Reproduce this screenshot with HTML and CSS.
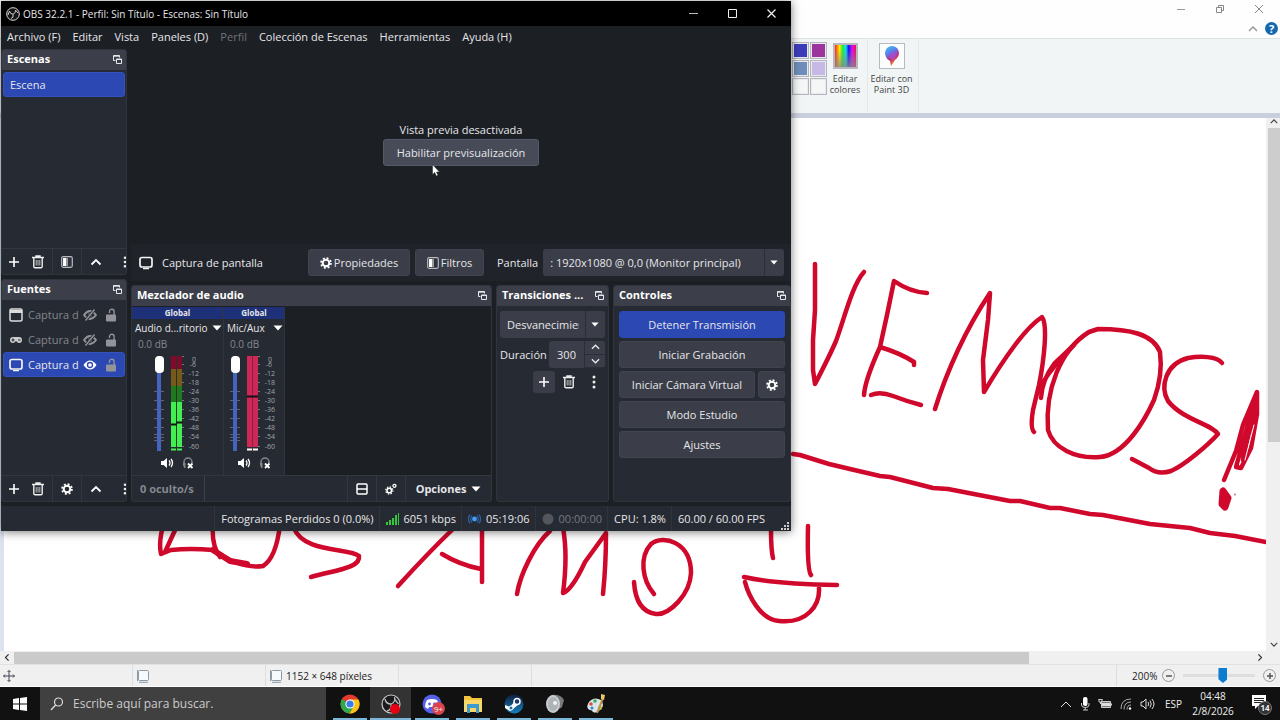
FILE: index.html
```html
<!DOCTYPE html>
<html lang="es">
<head>
<meta charset="utf-8">
<title>OBS 32.2.1 - Perfil: Sin Título - Escenas: Sin Título</title>
<link rel="stylesheet" href="styles.css">
</head>
<body>
<svg class="defs" aria-hidden="true">
  <symbol id="i-float" viewBox="0 0 9 9"><path d="M0.5 5.5v-5h6v2M0.5 1.2h6M0.5 5.5h2M3.5 4h5v4.500h-5zM3.5 4.500h5" fill="none" stroke="#e8e8ec"/></symbol>
  <symbol id="i-plus" viewBox="0 0 12 12"><path d="M6 1v10M1 6h10" fill="none" stroke="#fff" stroke-width="1.6"/></symbol>
  <symbol id="i-trash" viewBox="0 0 14 14"><path d="M1 2.5h12M5 2V1h4v1M2.8 3v8.5q0 1.2 1.2 1.2h6q1.2 0 1.2-1.2V3" fill="none" stroke="#eee" stroke-width="1.4"/><path d="M5.2 5v5.500M7 5v5.500M8.8 5v5.500" stroke="#bbb" fill="none"/></symbol>
  <symbol id="i-filter" viewBox="0 0 12 12"><rect x=".7" y=".7" width="10.6" height="10.6" rx="1.5" fill="#30343d" stroke="#b8bac0" stroke-width="1.2"/><path d="M2 2h3v8H2z" fill="#fff"/><path d="M5 2h2v8H5z" fill="#999"/></symbol>
  <symbol id="i-up" viewBox="0 0 12 12"><path d="M1.5 8.5L6 4l4.500 4.500" fill="none" stroke="#fff" stroke-width="1.8"/></symbol>
  <symbol id="i-dots" viewBox="0 0 4 14"><g fill="#eee"><circle cx="2" cy="2" r="1.500"/><circle cx="2" cy="7" r="1.500"/><circle cx="2" cy="12" r="1.500"/></g></symbol>
  <symbol id="i-gear" viewBox="0 0 12 12"><circle cx="6" cy="6" r="3.300" fill="none" stroke="#fff" stroke-width="2"/><circle cx="6" cy="6" r="5" fill="none" stroke="#fff" stroke-width="1.600" stroke-dasharray="2 1.927"/></symbol>
  <symbol id="i-gears" viewBox="0 0 12 12"><circle cx="4.300" cy="7.500" r="2.300" fill="none" stroke="#fff" stroke-width="1.600"/><circle cx="4.300" cy="7.500" r="3.600" fill="none" stroke="#fff" stroke-width="1.200" stroke-dasharray="1.400 1.427"/><circle cx="9.500" cy="2.800" r="1.500" fill="none" stroke="#fff" stroke-width="1.300"/></symbol>
  <symbol id="i-monitor" viewBox="0 0 14 14"><rect x="1" y="1.500" width="12" height="9.500" rx="2" fill="none" stroke="#f4f4f4" stroke-width="1.700"/><path d="M4 12.600h6" stroke="#f4f4f4" stroke-width="1.300"/></symbol>
  <symbol id="i-window" viewBox="0 0 14 14"><rect x="1" y="1" width="12" height="12" rx="1.500" fill="none" stroke="#ddd" stroke-width="1.500"/><path d="M1 2h12v3H1z" fill="#ddd"/></symbol>
  <symbol id="i-pad" viewBox="0 0 14 14"><path d="M4 4h6a3 3 0 0 1 0 6q-1.500 0-2-1.500H6Q5.500 10 4 10a3 3 0 0 1 0-6z" fill="#ccc"/><path d="M2.500 7h3M4 5.500v3M9 7h2.500" stroke="#272a33" stroke-width="1.100"/></symbol>
  <symbol id="i-eye" viewBox="0 0 14 14"><path d="M.5 7Q3.500 2.500 7 2.500T13.500 7Q10.500 11.500 7 11.500T.5 7z" fill="#fff"/><circle cx="7" cy="7" r="2.500" fill="none" stroke="#2b48b3" stroke-width="1.300"/></symbol>
  <symbol id="i-noeye" viewBox="0 0 14 14"><path d="M1 7Q4 3 7 3T13 7Q10 11 7 11T1 7z" fill="none" stroke="#92949a" stroke-width="1.800"/><circle cx="7" cy="7" r="2" fill="#92949a"/><path d="M2.500 12.500l9-11" stroke="#272a33" stroke-width="3"/><path d="M2.500 12.500l9-11" stroke="#92949a" stroke-width="1.400"/></symbol>
  <symbol id="i-lock" viewBox="0 0 12 14"><rect x="1" y="6.500" width="10" height="7" rx="1" fill="#92949a"/><path d="M4.500 5V3.500a2.300 2.300 0 0 1 4.600 0V7" fill="none" stroke="#92949a" stroke-width="1.400"/></symbol>
  <symbol id="i-speaker" viewBox="0 0 13 12"><path d="M0 4h2.500L6 1v10L2.500 8H0z" fill="#fff"/><path d="M8 3.500q2 2.500 0 5M10 2q3 4 0 8" fill="none" stroke="#fff" stroke-width="1.300"/></symbol>
  <symbol id="i-phones" viewBox="0 0 12 12"><path d="M2 9V5a4 4 0 0 1 8 0v1" fill="none" stroke="#85878d" stroke-width="1.500"/><path d="M1 6h2.500v5H2z" fill="#85878d"/><path d="M6 6.500l4.500 4.500M10.500 6.500L6 11" stroke="#fff" stroke-width="1.800"/></symbol>
  <symbol id="i-tri" viewBox="0 0 10 6"><path d="M.5 .5h9L5 5.500z" fill="#fff"/></symbol>
  <symbol id="i-chev" viewBox="0 0 10 6"><path d="M1 5l4-4 4 4" fill="none" stroke="currentColor" stroke-width="1.500"/></symbol>
  <symbol id="i-sel" viewBox="0 0 14 14"><rect x="2.500" y="1.500" width="10" height="10" rx="1" fill="#f7fafc" stroke="#8d99a3"/><path d="M1.500 1v11M3 13.300h9" stroke="#8d99a3"/></symbol>
</svg>

<div class="paint">
  <header class="paint-title">
    <div class="paint-winbtns">
      <button aria-label="Minimizar"><svg width="10" height="10"><path d="M1 5.500h8" stroke="#999"/></svg></button>
      <button aria-label="Restaurar"><svg width="10" height="10"><path d="M1.500 3.500h5v5h-5zM3.500 3v-1.500h5v5H7" fill="none" stroke="#888"/></svg></button>
      <button aria-label="Cerrar"><svg width="10" height="10"><path d="M1 1l8 8M9 1L1 9" stroke="#888"/></svg></button>
    </div>
    <div class="paint-help">
      <button aria-label="Contraer cinta"><svg class="grey" width="10" height="6"><use href="#i-chev"/></svg></button>
      <button class="help" aria-label="Ayuda">?</button>
    </div>
  </header>
  <div class="ribbon">
    <div class="swatches">
      <i class="c1"></i><i class="c2"></i><i class="c3"></i><i class="c4"></i><i></i><i></i>
    </div>
    <button class="rib-btn rib-colors"><span class="rainbow"></span><span>Editar<br>colores</span></button>
    <button class="rib-btn rib-3d"><svg width="26" height="26" viewBox="0 0 26 26"><defs><linearGradient id="g3" x1="0" y1="0" x2=".4" y2="1"><stop offset="0" stop-color="#3bd0e8"/><stop offset=".4" stop-color="#5b7cf0"/><stop offset=".7" stop-color="#c02a80"/><stop offset="1" stop-color="#f08020"/></linearGradient></defs><rect x=".5" y=".5" width="25" height="25" fill="#fcfdfd" stroke="#b4bbc2"/><path d="M13 3a7 7 0 0 1 7 7q0 4-4 7l-4 6-1-5Q6 15 6 10a7 7 0 0 1 7-7z" fill="url(#g3)"/><path d="M12 10q4-2 6 1-2 5-5 6-3-2-1-7z" fill="#a453d8" opacity=".7"/></svg><span>Editar con<br>Paint 3D</span></button>
  </div>
  <div class="work">
    <main class="canvas">
      <svg class="drawing" width="1262" height="533" viewBox="4 118 1262 533" role="img" aria-label="Dibujo">
        <g fill="none" stroke="#d0082b" stroke-width="4.500" stroke-linecap="round" stroke-linejoin="round">
          <path d="M815 264V310L813 340V370L815 384Q830 355 836 341C844 320 852 285 864 272"/>
          <path d="M894 281L887 315 880 347Q865 380 864 395M894 281Q910 292 927 293M880 347Q900 353 914 362V365M871 395Q880 391 893 396T921 405"/>
          <path d="M935 409Q944 380 958 350T990 293L988 320 983 360 984 392Q1000 365 1015 345T1042 317C1048 325 1044 360 1039 385L1033 410Q1030 428 1034 432M1041 398Q1042 380 1054 364L1074 345Q1042 378 1040 390"/>
          <path d="M1089 332C1060 350 1045 390 1048 430C1053 448 1075 459 1100 457C1125 455 1145 420 1154 400Q1163 375 1160 352C1153 334 1130 329 1098 329L1089 332"/>
          <path d="M1222 363C1217 356 1200 356 1188 358C1165 364 1160 387 1168 401C1183 420 1212 424 1218 434C1209 444 1185 465 1171 471Q1158 475 1149 468L1132 459"/>
          <path d="M1224 480L1236 451 1243 425 1257 392 1257 414 1251 448 1241 468 1236 467 1252 410 1240 455 1256 400 1243 460 1250 415"/>
          <path d="M1254 425L1245 460" stroke="#fff" stroke-width="1"/>
          <path d="M1223 491l-1 13 3 3 3-9z" stroke-width="7" fill="#d0082b"/>
          <path d="M1235 494v1" stroke-width="1"/>
          <path d="M793 454L800 455 829 464 850 469 880 476 890 477 933 488 948 489 1010 501 1020 501 1050 508 1060 508 1090 514 1103 515 1150 524 1170 526 1190 528 1210 533 1235 536 1266 542"/>
          <path d="M165 520Q158 540 161 554L171 550Q190 548 213 550C235 565 250 568 263 566Q276 558 280 525M176 528L165 552M213 522Q211 545 220 557"/>
          <path d="M213 550L230 561 247 564" stroke-width="6"/>
          <path d="M294 528C303 553 350 548 359 556C361 568 335 570 311 577"/>
          <path d="M454 528Q428 553 398 586M482 528V582M442 554Q460 565 481 569"/>
          <path d="M550 531C534 545 520 575 517 594M563 528Q568 555 563 593Q572 590 585 562L606 533Q606 565 603 594"/>
          <path d="M654 594C642 580 639 557 651 544C663 534 691 542 691 573C690 595 669 615 656 614C640 612 635 598 634 582"/>
          <path d="M771 530Q771 550 773 558M808 526Q807 570 811 575M744 577Q775 584 837 585M745 582C748 594 760 620 779 621C807 624 820 605 819 588"/>
        </g>
      </svg>
    </main>
    <div class="vscroll"><svg width="8" height="5"><use href="#i-chev"/></svg><span class="vthumb"></span><svg class="flip" width="8" height="5"><use href="#i-chev"/></svg></div>
  </div>
  <div class="hscroll"><svg class="left" width="8" height="5"><use href="#i-chev"/></svg><span class="hthumb"></span><svg class="right" width="8" height="5"><use href="#i-chev"/></svg></div>
  <footer class="paint-status">
    <div class="cell"><svg width="12" height="12" viewBox="0 0 12 12"><path d="M6 .5v11M.5 6h11M4.500 2L6 .5 7.500 2M4.500 10L6 11.500 7.500 10M2 4.500L.5 6 2 7.500M10 4.500L11.500 6 10 7.500" fill="none" stroke="#445"/></svg></div>
    <div class="cell"><svg width="14" height="14"><use href="#i-sel"/></svg></div>
    <div class="cell"><svg width="14" height="14"><use href="#i-sel"/></svg>1152 × 648 píxeles</div>
    <div class="cell"></div>
    <div class="cell grow"></div>
    <div class="cell zoom">
      <label for="zoom">200%</label>
      <button class="round" aria-label="Alejar"><svg width="8" height="8"><path d="M1 4h6" stroke="#555" stroke-width="1.500"/></svg></button>
      <input id="zoom" type="range" min="0" max="100" value="56">
      <button class="round" aria-label="Acercar"><svg width="8" height="8"><path d="M1 4h6M4 1v6" stroke="#555" stroke-width="1.500"/></svg></button>
    </div>
  </footer>
</div>

<section class="obs">
  <header class="obs-title">
    <svg width="14" height="14" viewBox="0 0 14 14"><circle cx="7" cy="7" r="6.300" fill="#151515" stroke="#ddd"/><path d="M3.500 4Q4 7 7 7.200M7 7.200Q10 6 9.500 3.200M7 7.200Q8 11 5 11.500M9.500 3.200L12 6M3.500 4L2 8" fill="none" stroke="#ccc"/></svg>
    <span>OBS 32.2.1 - Perfil: Sin Título - Escenas: Sin Título</span>
    <div class="obs-winbtns">
      <button aria-label="Minimizar"><svg width="9" height="9"><path d="M0 4.500h9" stroke="#bbb"/></svg></button>
      <button aria-label="Maximizar"><svg width="9" height="9"><path d="M.5 .5h8v8h-8z" fill="none" stroke="#eee"/></svg></button>
      <button aria-label="Cerrar"><svg width="9" height="9"><path d="M.5 .5l8 8M8.500 .5l-8 8" stroke="#eee" stroke-width="1.200"/></svg></button>
    </div>
  </header>
  <nav class="menu">
    <button>Archivo (F)</button><button>Editar</button><button>Vista</button><button>Paneles (D)</button><button disabled>Perfil</button><button>Colección de Escenas</button><button>Herramientas</button><button>Ayuda (H)</button>
  </nav>
  <div class="obs-body">
    <aside class="side">
      <section class="dock scenes">
        <h2>Escenas<svg width="9" height="9"><use href="#i-float"/></svg></h2>
        <div class="list"><button class="row sel">Escena</button></div>
        <div class="tools">
          <button aria-label="Añadir"><svg width="12" height="12"><use href="#i-plus"/></svg></button>
          <button aria-label="Eliminar"><svg width="14" height="14"><use href="#i-trash"/></svg></button>
          <button class="sep wide-gap" aria-label="Filtros"><svg width="12" height="12"><use href="#i-filter"/></svg></button>
          <button class="sep" aria-label="Subir"><svg width="12" height="12"><use href="#i-up"/></svg></button>
          <button class="more" aria-label="Más"><svg width="4" height="12"><use href="#i-dots"/></svg></button>
        </div>
      </section>
      <section class="dock sources">
        <h2>Fuentes<svg width="9" height="9"><use href="#i-float"/></svg></h2>
        <div class="list">
          <div class="row dim"><svg width="14" height="14"><use href="#i-window"/></svg><span>Captura d</span><svg width="14" height="14"><use href="#i-noeye"/></svg><svg width="12" height="14"><use href="#i-lock"/></svg></div>
          <div class="row dim"><svg width="14" height="14"><use href="#i-pad"/></svg><span>Captura d</span><svg width="14" height="14"><use href="#i-noeye"/></svg><svg width="12" height="14"><use href="#i-lock"/></svg></div>
          <div class="row sel"><svg width="14" height="14"><use href="#i-monitor"/></svg><span>Captura d</span><svg width="14" height="14"><use href="#i-eye"/></svg><svg width="12" height="14"><use href="#i-lock"/></svg></div>
        </div>
        <div class="tools">
          <button aria-label="Añadir"><svg width="12" height="12"><use href="#i-plus"/></svg></button>
          <button aria-label="Eliminar"><svg width="14" height="14"><use href="#i-trash"/></svg></button>
          <button class="sep wide-gap" aria-label="Propiedades"><svg width="12" height="12"><use href="#i-gear"/></svg></button>
          <button class="sep" aria-label="Subir"><svg width="12" height="12"><use href="#i-up"/></svg></button>
          <button class="more" aria-label="Más"><svg width="4" height="12"><use href="#i-dots"/></svg></button>
        </div>
      </section>
    </aside>
    <div class="center">
      <div class="preview">
        <p>Vista previa desactivada</p>
        <button class="btn light">Habilitar previsualización</button>
      </div>
      <div class="srcbar">
        <svg width="14" height="14"><use href="#i-monitor"/></svg>
        <span class="srcname">Captura de pantalla</span>
        <button class="btn props"><svg width="12" height="12"><use href="#i-gear"/></svg>Propiedades</button>
        <button class="btn filt"><svg width="12" height="12"><use href="#i-filter"/></svg>Filtros</button>
        <label for="screen">Pantalla</label>
        <div class="combo screen"><select id="screen"><option>: 1920x1080 @ 0,0 (Monitor principal)</option></select><svg width="8" height="5"><use href="#i-tri"/></svg></div>
      </div>
      <div class="docks">
        <section class="dock mixer">
          <h2>Mezclador de audio<svg width="9" height="9"><use href="#i-float"/></svg></h2>
          <div class="channels">
            <div class="chan wide">
              <div class="global">Global</div>
              <button class="chname">Audio d...ritorio<svg width="10" height="6"><use href="#i-tri"/></svg></button>
              <div class="db">0.0 dB</div>
              <div class="levels">
                <div class="fader"><input type="range" aria-label="Volumen de escritorio" value="100"></div>
                <svg class="meter" width="30" height="96" viewBox="0 0 30 96">
                  <path d="M0 0h11v13H0z" fill="#7f0a2b"/><path d="M0 13h11v17H0z" fill="#775a1a"/><path d="M0 30h11v16H0z" fill="#20791f"/><path d="M0 46h11v45H0zM0 92.500h11v2H0z" fill="#42ef50"/><path d="M5.500 0v95" stroke="#23332a"/><path d="M0 68.500h6M5.500 66.500h6" stroke="#101510" stroke-width="2"/>
                  <path d="M11 .5h2M11 8.500h2M11 17.500h2M11 26.500h2M11 35.500h2M11 44.500h2M11 53.500h2M11 62.500h2M11 71.500h2M11 80.500h2M11 90.500h2" stroke="#777"/>
                  <g class="scale"><text x="23" y="6">0</text><text x="22" y="11">-6</text><text x="23" y="20">-12</text><text x="23" y="29">-18</text><text x="23" y="38">-24</text><text x="23" y="47">-30</text><text x="23" y="56">-36</text><text x="23" y="65">-42</text><text x="23" y="74">-48</text><text x="23" y="83">-54</text><text x="23" y="93">-60</text></g>
                </svg>
              </div>
              <div class="chbtns"><button aria-label="Silenciar"><svg width="13" height="12"><use href="#i-speaker"/></svg></button><button aria-label="Monitorizar"><svg width="12" height="12"><use href="#i-phones"/></svg></button></div>
            </div>
            <div class="chan">
              <div class="global">Global</div>
              <button class="chname">Mic/Aux<svg width="10" height="6"><use href="#i-tri"/></svg></button>
              <div class="db">0.0 dB</div>
              <div class="levels">
                <div class="fader"><input type="range" aria-label="Volumen de Mic/Aux" value="100"></div>
                <svg class="meter" width="30" height="96" viewBox="0 0 30 96">
                  <path d="M0 0h11v91H0z" fill="#cf2756"/><path d="M0 92.500h11v2H0z" fill="#fff"/><path d="M5.500 0v95" stroke="#7e2444"/><path d="M0 40.500h11" stroke="#101015" stroke-width="2"/>
                  <path d="M11 .5h2M11 8.500h2M11 17.500h2M11 26.500h2M11 35.500h2M11 44.500h2M11 53.500h2M11 62.500h2M11 71.500h2M11 80.500h2M11 90.500h2" stroke="#777"/>
                  <g class="scale"><text x="23" y="6">0</text><text x="22" y="11">-6</text><text x="23" y="20">-12</text><text x="23" y="29">-18</text><text x="23" y="38">-24</text><text x="23" y="47">-30</text><text x="23" y="56">-36</text><text x="23" y="65">-42</text><text x="23" y="74">-48</text><text x="23" y="83">-54</text><text x="23" y="93">-60</text></g>
                </svg>
              </div>
              <div class="chbtns"><button aria-label="Silenciar"><svg width="13" height="12"><use href="#i-speaker"/></svg></button><button aria-label="Monitorizar"><svg width="12" height="12"><use href="#i-phones"/></svg></button></div>
            </div>
          </div>
          <div class="mixbar">
            <span class="hidden-count">0 oculto/s</span>
            <button class="mb" aria-label="Disposición"><svg width="12" height="12"><path d="M2 1h8q1 0 1 1v8q0 1-1 1H2q-1 0-1-1V2q0-1 1-1zM1 6h10" fill="none" stroke="#fff" stroke-width="1.500"/></svg></button>
            <button class="mb" aria-label="Propiedades avanzadas"><svg width="12" height="12"><use href="#i-gears"/></svg></button>
            <button class="mb opts">Opciones<svg width="10" height="6"><use href="#i-tri"/></svg></button>
          </div>
        </section>
        <section class="dock trans">
          <h2><span>Transiciones ...</span><svg width="9" height="9"><use href="#i-float"/></svg></h2>
          <div class="trans-body">
            <div class="combo"><select aria-label="Transición"><option>Desvanecimiento</option></select><svg width="8" height="5"><use href="#i-tri"/></svg></div>
            <div class="dur"><label for="dur">Duración</label><div class="spin"><input id="dur" type="text" value="300"><div class="arrows"><button aria-label="Más"><svg width="9" height="6"><use href="#i-chev"/></svg></button><button aria-label="Menos"><svg class="flip" width="9" height="6"><use href="#i-chev"/></svg></button></div></div></div>
            <div class="tbtns"><button class="box" aria-label="Añadir transición"><svg width="12" height="12"><use href="#i-plus"/></svg></button><button aria-label="Eliminar transición"><svg width="14" height="14"><use href="#i-trash"/></svg></button><button aria-label="Menú"><svg width="4" height="14"><use href="#i-dots"/></svg></button></div>
          </div>
        </section>
        <section class="dock ctrl">
          <h2>Controles<svg width="9" height="9"><use href="#i-float"/></svg></h2>
          <div class="ctrl-body">
            <button class="btn primary">Detener Transmisión</button>
            <button class="btn">Iniciar Grabación</button>
            <div class="pair"><button class="btn">Iniciar Cámara Virtual</button><button class="btn" aria-label="Configurar cámara"><svg width="12" height="12"><use href="#i-gear"/></svg></button></div>
            <button class="btn">Modo Estudio</button>
            <button class="btn">Ajustes</button>
          </div>
        </section>
      </div>
    </div>
  </div>
  <footer class="obs-status">
    <div>Fotogramas Perdidos 0 (0.0%)</div>
    <div><svg width="13" height="12"><path d="M0 9h2v3H0zM3 7h2v5H3zM6 5h2v7H6zM9 2h2v10H9zM12 0h1v12h-1z" fill="#35c83a"/></svg>6051 kbps</div>
    <div><svg width="13" height="12" viewBox="0 0 13 12"><circle cx="6.500" cy="6" r="2.400" fill="#4a9df5"/><path d="M4 2.500q-2.500 3.500 0 7M9 2.500q2.500 3.500 0 7M2 1.500q-3 4.500 0 9M11 1.500q3 4.500 0 9" fill="none" stroke="#2866b0" stroke-width="1.200"/></svg>05:19:06</div>
    <div class="off"><svg width="12" height="12"><circle cx="6" cy="6" r="5.500" fill="#54565e"/></svg>00:00:00</div>
    <div>CPU: 1.8%</div>
    <div class="fps">60.00 / 60.00 FPS</div>
    <svg class="grip" width="8" height="8"><path d="M6 0h2v2H6zM3 3h2v2H3zM6 3h2v2H6zM0 6h2v2H0zM3 6h2v2H3zM6 6h2v2H6z" fill="#ccc"/></svg>
  </footer>
  <svg class="cursor" width="8" height="13" viewBox="0 0 8 13"><path d="M.5 .5v10l2.200-2 1.600 3.500 1.700-.8L4.500 8h3z" fill="#fff" stroke="#222" stroke-width=".5"/></svg>
</section>

<footer class="taskbar">
  <button class="start" aria-label="Inicio"><svg width="14" height="14"><path d="M0 2l6-1v5.500H0zM7 .900L14 0v6.500H7zM0 7.500h6V13l-6-1zM7 7.500h7V14l-7-1z" fill="#fff"/></svg></button>
  <label class="search"><svg width="14" height="14"><circle cx="8.500" cy="5" r="4" fill="none" stroke="#ddd" stroke-width="1.200"/><path d="M5.600 8L1 13" stroke="#ddd" stroke-width="1.300"/></svg><input type="text" placeholder="Escribe aquí para buscar." aria-label="Buscar"></label>
  <button class="app" aria-label="Chrome"><svg width="20" height="20" viewBox="0 0 20 20"><circle cx="10" cy="10" r="9.500" fill="#e53a2e"/><path d="M10 10L1.800 5.200A9.500 9.500 0 0 0 9.500 19.500L14 12z" fill="#2fa84f"/><path d="M10 5.500h8.400A9.500 9.500 0 0 1 9.500 19.500L14 12z" fill="#fbc516"/><circle cx="10" cy="10" r="4.600" fill="#fff"/><circle cx="10" cy="10" r="3.600" fill="#3b7de8"/></svg></button>
  <button class="app active" aria-label="OBS"><svg width="20" height="20" viewBox="0 0 20 20"><circle cx="10" cy="10" r="9" fill="#1b1b1d" stroke="#ccc" stroke-width="1.200"/><path d="M4 5q1 5 6 5 5-2 3.500-7M10 10q1 6-4 7M13.500 5l4 5" fill="none" stroke="#bbb" stroke-width="1.300"/><circle cx="14" cy="15" r="5" fill="#e60012"/></svg></button>
  <button class="app" aria-label="Discord"><svg width="20" height="20" viewBox="0 0 20 20"><circle cx="10" cy="10" r="9.500" fill="#5661e8"/><path d="M5 6q5-2 10 0 2 3 2 7l-3 2-1-2H7l-1 2-3-2q0-4 2-7z" fill="#fff"/><circle cx="7.500" cy="10" r="1.400" fill="#5661e8"/><circle cx="12.500" cy="10" r="1.400" fill="#5661e8"/></svg><span class="badge">9+</span></button>
  <button class="app" aria-label="Explorador"><svg width="20" height="20" viewBox="0 0 20 20"><path d="M1 2h6l2 2h10v14H1z" fill="#f5c33b"/><path d="M1 6h18v12H1z" fill="#fbd768"/><path d="M4 10h12v9h-3v-5H7v5H4z" fill="#3d9bd1"/></svg></button>
  <button class="app" aria-label="Steam"><svg width="20" height="20" viewBox="0 0 20 20"><defs><linearGradient id="gs" x2="0" y2="1"><stop stop-color="#101c42"/><stop offset="1" stop-color="#1585bd"/></linearGradient></defs><circle cx="10" cy="10" r="9.500" fill="url(#gs)"/><path d="M1 11l5 2 5-6 4 3-6 5-3 2-5-3z" fill="#fff"/><circle cx="13" cy="7.500" r="3" fill="#1b3b69" stroke="#fff" stroke-width="1.500"/><circle cx="7" cy="14" r="2" fill="#256a9a" stroke="#fff"/></svg></button>
  <button class="app" aria-label="Audio"><svg width="20" height="20" viewBox="0 0 20 20"><path d="M6 1q10-1 13 5l-2 7-8 6z" fill="#777b7e"/><ellipse cx="8" cy="10" rx="7" ry="9" fill="#c9cccf"/><ellipse cx="8" cy="10" rx="5" ry="7" fill="#aeb3b6"/><circle cx="10" cy="9" r="2" fill="#eef4f7"/></svg></button>
  <button class="app" aria-label="Paint"><svg width="20" height="20" viewBox="0 0 20 20"><path d="M3 8Q8 2 15 6q4 5 0 9-4 5-8 3-1-2-3-2-5-2-1-8z" fill="#d9e7ec"/><circle cx="5" cy="10" r="1.800" fill="#e14b3b"/><circle cx="9" cy="7" r="1.800" fill="#3fa956"/><circle cx="6" cy="14" r="1.500" fill="#3a7bd5"/><circle cx="14" cy="14" r="2" fill="#9ec54d"/><path d="M17 4l-6 15" stroke="#c98a3f" stroke-width="2"/><path d="M15 0l4 1-1 5-3-1z" fill="#ecc36e"/></svg></button>
  <div class="tray">
    <svg width="12" height="8" viewBox="0 0 12 8"><path d="M1 7l5-5 5 5" fill="none" stroke="#ddd"/></svg>
    <svg width="10" height="14" viewBox="0 0 10 14"><rect x="3" y="0" width="4.500" height="9" rx="2" fill="#fff"/><path d="M1.500 6v2q0 2.500 3.700 2.500T9 8V6M5.200 10v3M3 13h5" fill="none" stroke="#ccc"/></svg>
    <svg width="14" height="12" viewBox="0 0 14 12"><path d="M4 4.500h8v4H4z" fill="#ddd"/><path d="M3.500 3.500h9v6h-9zM13.500 5.500v2M.5 1.500h4M1 1v3h3V1M2.500 4v2" fill="none" stroke="#ccc"/></svg>
    <svg width="12" height="12" viewBox="0 0 12 12"><path d="M1 11Q1 1 11 1M4 11.500Q4 4 11 4M7 11.500Q7 7 11 7" fill="none" stroke="#aaa"/><circle cx="10" cy="10.500" r="1.200" fill="#fff"/></svg>
    <svg width="15" height="12" viewBox="0 0 15 12"><path d="M1 4h2l3-3v10L3 8H1zM8 4q1.500 2 0 4M10 2.500q2.500 3.500 0 7M12 1q4 5 0 10" fill="none" stroke="#ddd"/></svg>
    <span class="lang">ESP</span>
    <time class="clock">04:48<br>2/8/2026</time>
    <button class="notif" aria-label="Notificaciones"><svg width="14" height="14"><path d="M0 0h14v11H6l-3 3v-3H0z" fill="#fff"/><path d="M2 3.500h10M2 5.500h10M2 7.500h7" stroke="#222"/></svg><span>14</span></button>
  </div>
</footer>
</body>
</html>
```
FILE: styles.css
```css
* { box-sizing: border-box; }
html, body { height: 100%; }
body {
  margin: 0;
  display: flex;
  flex-direction: column;
  overflow: hidden;
  position: relative;
  background: #fff;
  font: 11px/14px "Open Sans", "Noto Sans", sans-serif;
}
button, input, select { font: inherit; color: inherit; border: 0; background: none; padding: 0; margin: 0; }
button { display: flex; align-items: center; justify-content: center; white-space: nowrap; }
svg { flex: none; display: block; }
.defs { position: absolute; width: 0; height: 0; }
.flip { transform: rotate(180deg); }
.left { transform: rotate(-90deg); }
.right { transform: rotate(90deg); }

/* Paint */
.paint { flex: 1; min-height: 0; display: flex; flex-direction: column; color: #333; }
.paint-title { height: 38px; display: flex; flex-direction: column; align-items: flex-end; background: #fefefe; }
.paint-winbtns { display: flex; gap: 29px; padding: 4px 16px 0 0; }
.paint-help { display: flex; align-items: center; gap: 7px; padding: 8px 2px 0 0; }
.grey { color: #999; }
.help { width: 13px; height: 13px; border-radius: 50%; background: #1468b0; color: #fff; font-weight: 700; line-height: 13px; }
.ribbon { height: 75px; display: flex; padding-left: 792px; background: #f1f5f5; border-top: 1px solid #dfe3e6; color: #444; font-size: 9px; line-height: 11px; }
.swatches { display: grid; grid-template-columns: 17px 17px; grid-auto-rows: 17px; gap: 1px; padding-top: 3px; align-content: start; }
.swatches i { border: 1px solid #b5b5bd; background: #f5f7f7; box-shadow: inset 0 0 0 1px #e8eaee; }
.swatches .c1 { background: #3d3db9; }
.swatches .c2 { background: #9d349e; }
.swatches .c3 { background: #6c8eb8; }
.swatches .c4 { background: #c6b9e6; }
.rib-btn { flex-direction: column; justify-content: flex-start; gap: 4px; padding-top: 4px; text-align: center; border-right: 1px solid #e3e8ea; height: 73px; }
.rib-colors { width: 41px; padding-right: 4px; }
.rib-3d { width: 51px; padding-right: 3px; }
.rainbow { width: 25px; height: 26px; border: 2px solid #b9b6bd; background: linear-gradient(to top, #888c, transparent 80%), linear-gradient(to right, #f22, #fe0 22%, #2e3 36%, #1de 52%, #11e 65%, #d1e 82%, #e14); }
.work { flex: 1; min-height: 0; display: flex; border-top: 5px solid #c9cfdc; }
.canvas { flex: 1; min-width: 0; overflow: hidden; border-left: 4px solid #dbe3f1; background: #fff; }
.vscroll { width: 14px; display: flex; flex-direction: column; align-items: center; background: #f0f0f0; padding: 1px 0 4px 1px; color: #444; }
.vthumb { width: 12px; height: 314px; margin: 4px 0 auto; background: #cdcdcd; }
.hscroll { height: 13px; display: flex; align-items: center; background: #f0f0f0; padding: 0 16px 0 3px; color: #333; }
.hthumb { width: 80.5%; height: 12px; margin: 0 auto 0 3px; background: #cacaca; flex: none; }
.paint-status { height: 23px; display: flex; background: #f0f0f0; border-top: 1px solid #e2e2e2; border-bottom: 1px solid #fff; font-size: 10px; color: #222; }
.cell { width: 133px; display: flex; align-items: center; gap: 3px; padding-left: 3px; border-right: 1px solid #dcdfe2; }
.grow { flex: 1; }
.zoom { width: 163px; border: 0; padding: 0 4px 0 15px; gap: 5px; }
.round { width: 13px; height: 13px; flex: none; border: 1px solid #999; border-radius: 50%; }
#zoom { appearance: none; flex: 1; min-width: 0; height: 16px; margin: 0 3px; background: linear-gradient(#dedede, #dedede) center / 100% 3px no-repeat; }
#zoom::-webkit-slider-thumb { appearance: none; width: 9px; height: 15px; background: #0c7bd0; clip-path: polygon(0 0, 100% 0, 100% 75%, 50% 100%, 0 75%); }

/* OBS window */
.obs {
  position: absolute; left: 1px; top: 1px; width: 790px; height: 530px;
  display: flex; flex-direction: column;
  background: #1c1f24; color: #e6e6ea; box-shadow: 0 1px 9px #0008;
}
.obs-title { height: 25px; display: flex; align-items: center; gap: 3px; padding: 0 15px 0 5px; background: #000; font-size: 10px; }
.obs-winbtns { display: flex; gap: 30px; margin-left: auto; }
.menu { height: 23px; display: flex; align-items: center; gap: 12px; padding: 0 6px 2px; }
.menu button:disabled { color: #6f7278; }
.obs-body { flex: 1; min-height: 0; display: flex; gap: 4px; }
.side { width: 126px; display: flex; flex-direction: column; gap: 4px; }
.dock { display: flex; flex-direction: column; min-width: 0; background: #262a32; border: 1px solid #30343d; border-radius: 3px; overflow: hidden; }
.dock h2 { margin: 0; height: 20px; flex: none; display: flex; align-items: center; justify-content: space-between; padding: 0 4px 2px 5px; background: #3c3f49; color: #fff; font-size: 11px; white-space: nowrap; }
.scenes { height: 226px; }
.sources { flex: 1; min-height: 0; }
.list { flex: 1; padding: 2px 1px; }
.row { width: 100%; height: 25px; display: flex; align-items: center; gap: 5px; padding: 0 8px 0 6px; border-radius: 3px; justify-content: flex-start; }
.row span { flex: 1; min-width: 0; white-space: nowrap; }
.row svg:last-child { margin-left: 3px; }
.sel { background: #2b48b3; border: 1px solid #3453bd; }
.sources .sel { padding: 0 7px 0 5px; }
.dim { color: #84878e; }
.tools { height: 26px; display: flex; border-top: 1px solid #333740; overflow: hidden; }
.tools button { width: 24px; flex: none; }
.tools .sep { width: 29px; border-left: 1px solid #333740; }
.tools .wide-gap { margin-left: 2px; }
.tools .more { width: 30px; }
.center { flex: 1; min-width: 0; display: flex; flex-direction: column; }
.preview { height: 195px; display: flex; flex-direction: column; align-items: center; justify-content: center; gap: 2px; padding-bottom: 4px; }
.preview p { margin: 0; }
.btn { height: 27px; border-radius: 3px; background: #3b3e48; border: 1px solid #40444e; }
.light { background: #464b57; border-color: #535966; padding: 0 13px; }
.srcbar { height: 37px; display: flex; align-items: center; padding: 0 7px 0 8px; background: #20242a; }
.srcname { margin-left: 9px; width: 146px; }
.props { width: 102px; gap: 2px; margin-right: 5px; }
.filt { width: 69px; gap: 2px; margin-right: 13px; }
.combo { position: relative; height: 27px; background: #3b3e48; border-radius: 3px; }
.combo select { appearance: none; width: 100%; height: 27px; padding: 0 26px 0 7px; outline: 0; }
.combo::after { content: ""; position: absolute; right: 19px; top: 0; bottom: 0; border-left: 1px solid #2a2e36; }
.combo svg { position: absolute; right: 6px; top: 11px; }
.screen { flex: 1; margin-left: 5px; }
.docks { flex: 1; min-height: 0; display: flex; gap: 4px; padding-top: 4px; }
.mixer { flex: 1; }
.channels { flex: 1; min-height: 0; display: flex; background: #1c1f24; padding-top: 1px; }
.chan { width: 61px; border-right: 1px solid #30343d; background: #262a32; }
.wide { width: 92px; }
.global { height: 12px; background: #1e3077; text-align: center; font-size: 8px; line-height: 12px; font-weight: 700; }
.chname { width: 100%; height: 18px; justify-content: space-between; padding: 0 1px 0 3px; font-size: 10px; }
.db { color: #85888f; padding: 0 6px; font-size: 10px; height: 19px; }
.levels { display: flex; gap: 7px; padding-left: 6px; }
.wide .levels { padding-left: 22px; }
.meter { overflow: visible; }
.fader { width: 10px; height: 95px; background: repeating-linear-gradient(#60646c 0 1px, transparent 1px 9px) 0 35px / 10px 40px no-repeat, repeating-linear-gradient(#60646c 0 1px, transparent 1px 3px) 0 78px / 10px 8px no-repeat; }
.fader input { appearance: none; writing-mode: vertical-lr; direction: rtl; display: block; width: 10px; height: 95px; background: linear-gradient(#4464c0, #4464c0) center / 4px 100% no-repeat; }
.fader input::-webkit-slider-thumb { appearance: none; width: 9px; height: 17px; border-radius: 4px; background: #fff; }
.scale text { font-size: 7px; fill: #a2a4a9; text-anchor: middle; }
.chbtns { display: flex; gap: 8px; padding: 5px 0 0 14px; }
.wide .chbtns { padding-left: 29px; }
.mixbar { height: 26px; flex: none; display: flex; border-top: 1px solid #333740; font-weight: 700; }
.hidden-count { width: 73px; padding: 6px 0 0 8px; margin-right: auto; color: #85888f; border-right: 1px solid #3c4049; }
.mb { width: 29px; border-left: 1px solid #333740; }
.opts { width: 86px; gap: 5px; }
.trans { width: 113px; }
.trans h2 svg { margin-left: 4px; }
.trans-body { padding: 5px 3px; display: flex; flex-direction: column; gap: 3px; }
.dur { display: flex; align-items: center; justify-content: space-between; }
.spin { display: flex; width: 56px; height: 27px; border-radius: 3px; background: #3b3e48; }
.spin input { width: 36px; text-align: center; border-right: 1px solid #2a2e36; }
.arrows { flex: 1; display: flex; flex-direction: column; }
.arrows button { flex: 1; border-bottom: 1px solid #2a2e36; }
.tbtns { display: flex; justify-content: flex-end; gap: 3px; }
.tbtns button { width: 22px; height: 22px; border-radius: 3px; }
.tbtns .box { background: #3b3e48; }
.ctrl { width: 178px; }
.ctrl-body { padding: 5px; display: flex; flex-direction: column; gap: 3px; }
.ctrl-body .primary { background: #2b48b3; border-color: #2b48b3; }
.pair { display: grid; grid-template-columns: 1fr 27px; gap: 3px; }
.obs-status { height: 28px; flex: none; display: flex; justify-content: flex-end; margin-top: 1px; background: #262a32; border-top: 3px solid #1c1f24; position: relative; }
.obs-status div { display: flex; align-items: center; gap: 5px; padding: 0 5px 0 6px; border-left: 1px solid #30343d; white-space: nowrap; }
.obs-status .fps { padding-right: 26px; }
.off { color: #767980; }
.grip { position: absolute; right: 2px; bottom: 1px; }
.cursor { position: absolute; left: 431px; top: 163px; }

/* Taskbar */
.taskbar { height: 33px; flex: none; display: flex; background: #111; color: #eee; }
.start { width: 40px; }
.search { width: 286px; display: flex; align-items: center; gap: 9px; margin-right: 3px; padding-left: 10px; background: #404040; }
.search input { flex: 1; font-size: 12px; outline: 0; }
.search input::placeholder { color: #ccc; opacity: 1; }
.app { width: 41px; position: relative; box-shadow: inset 4px 0 #111, inset -3px 0 #111, inset 0 -2px #7bb7d9; }
.active { background: #333; box-shadow: inset 0 -2px #7bb7d9; }
.badge { position: absolute; left: 21px; top: 15px; width: 13px; height: 13px; border-radius: 50%; background: #d9434e; font-size: 8px; line-height: 13px; }
.tray { margin-left: auto; display: flex; align-items: center; gap: 8px; padding-right: 6px; }
.lang { font-size: 10px; margin-left: 2px; }
.clock { width: 46px; text-align: center; font-size: 10px; line-height: 15px; }
.notif { position: relative; margin: 0 8px 4px 8px; }
.notif span { position: absolute; left: 6px; top: 6px; width: 14px; height: 14px; border-radius: 50%; background: #333; border: 1px solid #777; font-size: 8px; line-height: 12px; font-weight: 700; }
```
